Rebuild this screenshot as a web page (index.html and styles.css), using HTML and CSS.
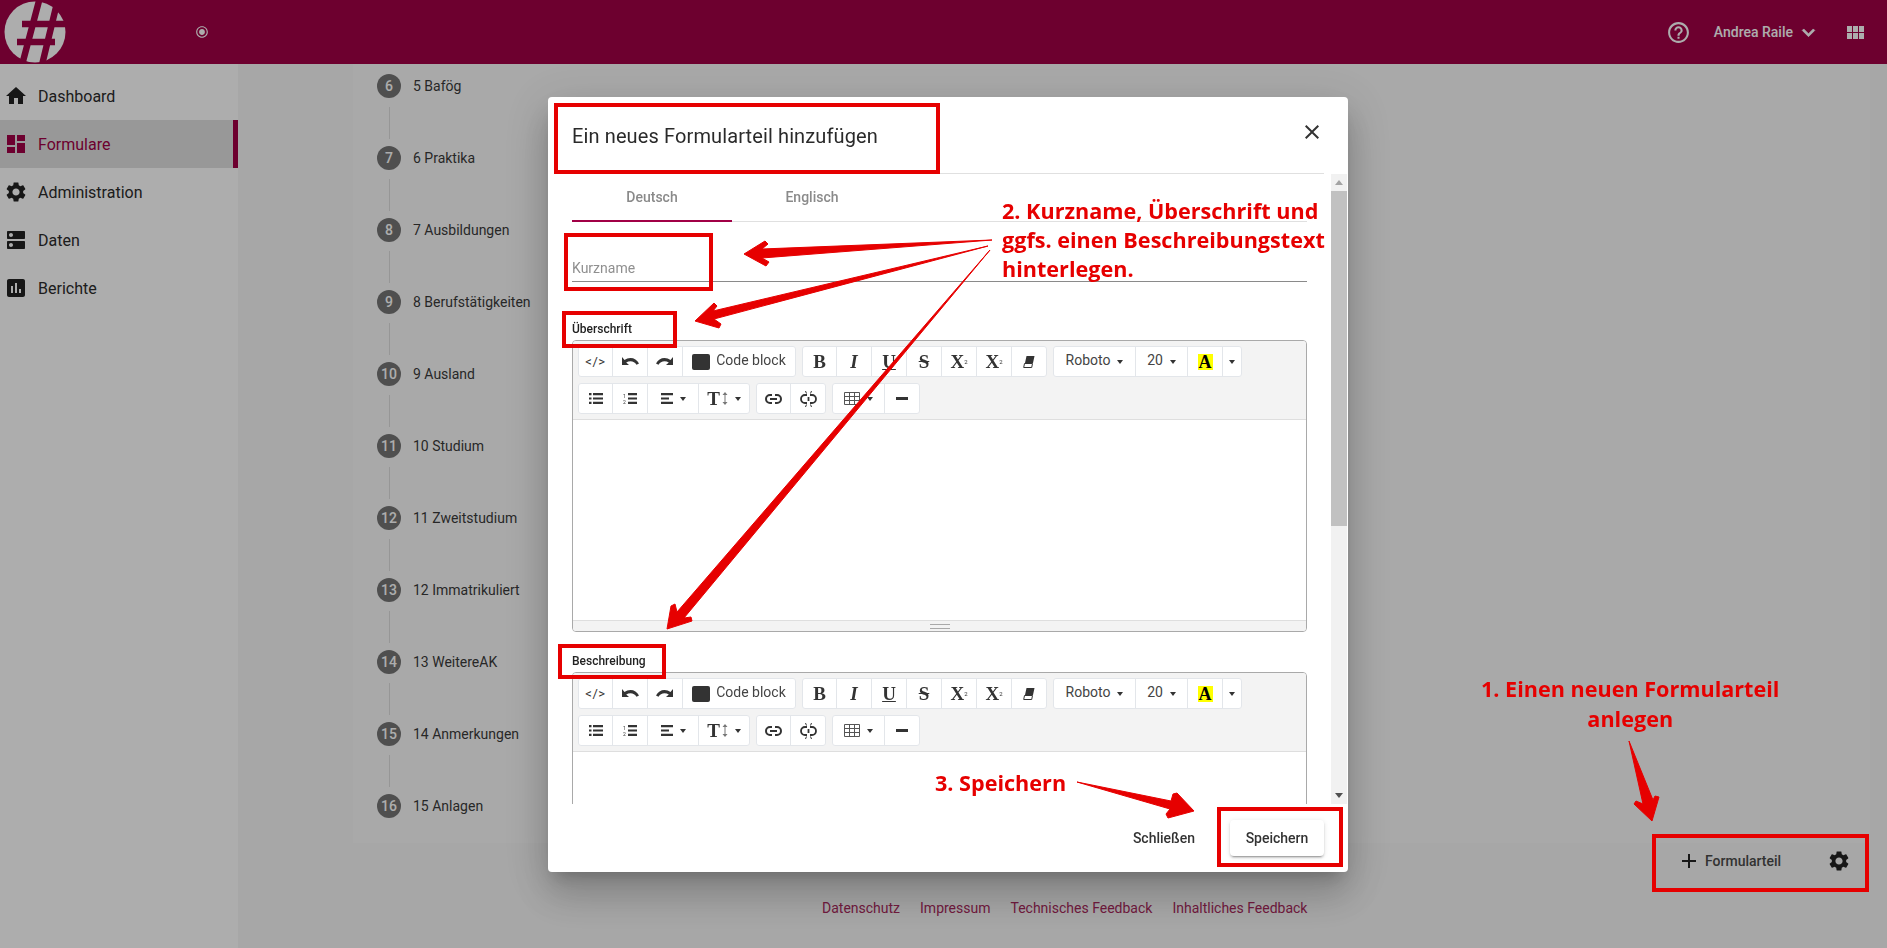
FILE: index.html
```html
<!DOCTYPE html>
<html lang="de">
<head>
  <meta charset="UTF-8">
  <meta name="viewport" content="width=device-width, initial-scale=1.0">
  <title>Formulare</title>
  <link rel="stylesheet" href="styles.css">
</head>
<body>
  <!-- toolbar icons, used twice -->
  <svg class="sprites">
    <symbol id="i-undo" viewBox="0 0 18 10"><path d="M1 0v8h7L5.200 5.400C6.500 4.600 8 4.200 9.500 4.200c2.500 0 4.800 1.300 6 3.500L18 6.500C16.300 3 13 1 9.500 1 7.300 1 5.200 1.800 3.500 3z"/></symbol>
    <symbol id="i-redo" viewBox="0 0 18 10"><path d="M17 0v8h-7l2.800-2.600C11.500 4.600 10 4.200 8.500 4.200c-2.500 0-4.800 1.300-6 3.500L0 6.500C1.700 3 5 1 8.500 1c2.200 0 4.300.8 6 2z"/></symbol>
    <symbol id="i-eraser" viewBox="0 0 14 14"><path d="M4.500 1H12.500L11 8H3z"/><path d="M2.500 8.500H10.500L9.700 12.500H1.700z" fill="#fff" stroke="#333"/></symbol>
    <symbol id="i-ul" viewBox="0 0 14 11"><path d="M0 0h2.500v2.200H0zM0 4.400h2.500v2.200H0zM0 8.800h2.500V11H0zM4 0h10v2.200H4zM4 4.400h10v2.200H4zM4 8.800h10V11H4z"/></symbol>
    <symbol id="i-ol" viewBox="0 0 14 11"><path d="M5 0h9v2.200H5zM5 4.400h9v2.200H5zM5 8.800h9V11H5z"/><text x="0" y="4.500" class="ico-num">1</text><text x="0" y="11" class="ico-num">2</text></symbol>
    <symbol id="i-align" viewBox="0 0 12 11"><path d="M0 0h12v2.200H0zM0 4.400h8v2.200H0zM0 8.800h12V11H0z"/></symbol>
    <symbol id="i-updown" viewBox="0 0 6 13"><path d="M3 0L5.500 3H3.500v7H5.500L3 13 .5 10H2.500V3H.5z"/></symbol>
    <symbol id="i-link" viewBox="0 0 17 10"><path d="M7 1H5a4 4 0 0 0 0 8h2M10 1h2a4 4 0 0 1 0 8h-2M5 5h7" fill="none" stroke="#333" stroke-width="2"/></symbol>
    <symbol id="i-unlink" viewBox="0 0 17 16"><path d="M7 4H5a4 4 0 0 0 0 8h2M10 4h2a4 4 0 0 1 0 8h-2M8.500 6v4" fill="none" stroke="#333" stroke-width="1.800"/><path d="M5.500 0l1 2.500M11.500 0l-1 2.500M5.500 16l1-2.500M11.500 16l-1-2.500" stroke="#333"/></symbol>
    <symbol id="i-table" viewBox="0 0 16 13"><path d="M.5.500h15v12H.5zM5.500.500v12M10.500.500v12M.5 4.500h15M.5 8.500h15" fill="none" stroke="#555"/></symbol>
    <symbol id="i-hr" viewBox="0 0 12 3"><path d="M0 0h12v3H0z"/></symbol>
    <symbol id="i-gear" viewBox="0 0 24 24"><path d="M19.140 12.940c.04-.3.06-.61.06-.94 0-.32-.02-.64-.07-.94l2.030-1.580c.18-.14.23-.41.12-.61l-1.920-3.320c-.12-.22-.37-.29-.59-.22l-2.390.96c-.5-.38-1.030-.7-1.620-.94l-.36-2.540c-.04-.24-.24-.41-.48-.41h-3.840c-.24 0-.43.17-.47.41l-.36 2.540c-.59.24-1.130.57-1.620.94l-2.390-.96c-.22-.08-.47 0-.59.22L2.740 8.870c-.12.21-.08.47.12.61l2.030 1.580c-.05.3-.09.63-.09.94s.02.64.07.94l-2.030 1.580c-.18.14-.23.41-.12.61l1.920 3.320c.12.22.37.29.59.22l2.390-.96c.5.38 1.030.7 1.620.94l.36 2.540c.05.24.24.41.48.41h3.840c.24 0 .44-.17.47-.41l.36-2.540c.59-.24 1.130-.56 1.620-.94l2.390.96c.22.08.47 0 .59-.22l1.920-3.320c.12-.22.07-.47-.12-.61l-2.010-1.580zM12 15.600c-1.980 0-3.600-1.620-3.600-3.600s1.620-3.600 3.600-3.600 3.600 1.620 3.600 3.600-1.620 3.600-3.600 3.600z"/></symbol>
  </svg>

  <header class="topbar">
    <svg class="logo" viewBox="0 0 62 62">
      <circle cx="31" cy="31" r="30.500" fill="#fff"/>
      <path d="M35.500-2L18 64M53 2L38 64M18 23H62M13 41H51" stroke="#a10046" stroke-width="6.500" fill="none"/>
    </svg>
    <svg class="radio-icon" viewBox="0 0 24 24"><path d="M12 7c-2.760 0-5 2.240-5 5s2.240 5 5 5 5-2.240 5-5-2.240-5-5-5zm0-5C6.480 2 2 6.480 2 12s4.480 10 10 10 10-4.480 10-10S17.520 2 12 2zm0 18c-4.420 0-8-3.580-8-8s3.580-8 8-8 8 3.580 8 8-3.580 8-8 8z"/></svg>
    <div class="topbar-right">
      <svg class="top-icon" viewBox="0 0 24 24"><path d="M11 18h2v-2h-2v2zm1-16C6.480 2 2 6.480 2 12s4.480 10 10 10 10-4.480 10-10S17.520 2 12 2zm0 18c-4.410 0-8-3.590-8-8s3.590-8 8-8 8 3.590 8 8-3.590 8-8 8zm0-14c-2.210 0-4 1.790-4 4h2c0-1.100.9-2 2-2s2 .9 2 2c0 2-3 1.750-3 5h2c0-2.250 3-2.500 3-5 0-2.210-1.790-4-4-4z"/></svg>
      <span class="user-name">Andrea Raile</span>
      <svg class="top-icon chevron" viewBox="0 0 24 24"><path d="M16.590 8.590L12 13.170 7.410 8.590 6 10l6 6 6-6z"/></svg>
      <div class="apps-grid"><i></i><i></i><i></i><i></i><i></i><i></i></div>
    </div>
  </header>

  <div class="layout">
    <nav class="sidebar">
      <a class="nav-item"><svg viewBox="0 0 24 24"><path d="M10 20v-6h4v6h5v-8h3L12 3 2 12h3v8z"/></svg>Dashboard</a>
      <a class="nav-item active"><svg viewBox="0 0 24 24"><path d="M3 13h8V3H3v10zm0 8h8v-6H3v6zm10 0h8V11h-8v10zm0-18v6h8V3h-8z"/></svg>Formulare</a>
      <a class="nav-item"><svg><use href="#i-gear"/></svg>Administration</a>
      <a class="nav-item"><svg viewBox="0 0 24 24"><path d="M20 13H4c-.55 0-1 .45-1 1v6c0 .55.45 1 1 1h16c.55 0 1-.45 1-1v-6c0-.55-.45-1-1-1zM7 19c-1.100 0-2-.9-2-2s.9-2 2-2 2 .9 2 2-.9 2-2 2zM20 3H4c-.55 0-1 .45-1 1v6c0 .55.45 1 1 1h16c.55 0 1-.45 1-1V4c0-.55-.45-1-1-1zM7 9c-1.100 0-2-.9-2-2s.9-2 2-2 2 .9 2 2-.9 2-2 2z"/></svg>Daten</a>
      <a class="nav-item"><svg viewBox="0 0 24 24"><path d="M19 3H5c-1.100 0-2 .9-2 2v14c0 1.100.9 2 2 2h14c1.100 0 2-.9 2-2V5c0-1.100-.9-2-2-2zM9 17H7v-7h2v7zm4 0h-2V7h2v10zm4 0h-2v-4h2v4z"/></svg>Berichte</a>
    </nav>

    <main class="main">
      <section class="sheet">
        <ol class="stepper">
          <li class="step"><span class="step-num">6</span>5 Bafög</li>
          <li class="step"><span class="step-num">7</span>6 Praktika</li>
          <li class="step"><span class="step-num">8</span>7 Ausbildungen</li>
          <li class="step"><span class="step-num">9</span>8 Berufstätigkeiten</li>
          <li class="step"><span class="step-num">10</span>9 Ausland</li>
          <li class="step"><span class="step-num">11</span>10 Studium</li>
          <li class="step"><span class="step-num">12</span>11 Zweitstudium</li>
          <li class="step"><span class="step-num">13</span>12 Immatrikuliert</li>
          <li class="step"><span class="step-num">14</span>13 WeitereAK</li>
          <li class="step"><span class="step-num">15</span>14 Anmerkungen</li>
          <li class="step"><span class="step-num">16</span>15 Anlagen</li>
        </ol>
      </section>
      <div class="actions">
        <svg class="add-icon" viewBox="0 0 24 24"><path d="M19 13h-6v6h-2v-6H5v-2h6V5h2v6h6v2z"/></svg>
        <span class="actions-label">Formularteil</span>
        <svg class="gear-icon"><use href="#i-gear"/></svg>
      </div>
      <footer class="page-footer">
        <a>Datenschutz</a>
        <a>Impressum</a>
        <a>Technisches Feedback</a>
        <a>Inhaltliches Feedback</a>
      </footer>
    </main>
  </div>

  <div class="backdrop"></div>

  <div class="modal">
    <div class="modal-header">
      <h2 class="modal-title">Ein neues Formularteil hinzufügen</h2>
      <svg class="modal-close" viewBox="0 0 24 24"><path d="M19 6.410L17.590 5 12 10.590 6.410 5 5 6.410 10.590 12 5 17.590 6.410 19 12 13.410 17.590 19 19 17.590 13.410 12z"/></svg>
    </div>
    <div class="modal-body">
      <div class="modal-content">
        <div class="tabs">
          <div class="tab active">Deutsch</div>
          <div class="tab">Englisch</div>
        </div>
        <div class="text-field">Kurzname</div>

        <div class="field-label">Überschrift</div>
        <div class="editor">
          <div class="toolbar">
            <div class="btn-group">
              <span class="tb-btn code">&lt;/&gt;</span>
              <span class="tb-btn"><svg class="ico-undo"><use href="#i-undo"/></svg></span>
              <span class="tb-btn"><svg class="ico-undo"><use href="#i-redo"/></svg></span>
              <span class="tb-btn wide"><i class="swatch"></i><span class="lifted">Code block</span></span>
            </div>
            <div class="btn-group">
              <span class="tb-btn serif">B</span>
              <span class="tb-btn serif italic">I</span>
              <span class="tb-btn serif under">U</span>
              <span class="tb-btn serif strike">S</span>
              <span class="tb-btn serif">X<sup>2</sup></span>
              <span class="tb-btn serif">X<sub>2</sub></span>
              <span class="tb-btn"><svg class="ico-eraser"><use href="#i-eraser"/></svg></span>
            </div>
            <div class="btn-group">
              <span class="tb-btn font"><span class="lifted">Roboto</span><i class="caret"></i></span>
              <span class="tb-btn size"><span class="lifted">20</span><i class="caret"></i></span>
              <span class="tb-btn serif"><b class="hilite">A</b></span>
              <span class="tb-btn narrow"><i class="caret solo"></i></span>
            </div>
          </div>
          <div class="toolbar second">
            <div class="btn-group">
              <span class="tb-btn"><svg class="ico-list"><use href="#i-ul"/></svg></span>
              <span class="tb-btn"><svg class="ico-list"><use href="#i-ol"/></svg></span>
              <span class="tb-btn mid"><svg class="ico-align"><use href="#i-align"/></svg><i class="caret"></i></span>
              <span class="tb-btn mid serif tt">T<svg class="ico-updown"><use href="#i-updown"/></svg><i class="caret"></i></span>
            </div>
            <div class="btn-group">
              <span class="tb-btn"><svg class="ico-link"><use href="#i-link"/></svg></span>
              <span class="tb-btn"><svg class="ico-unlink"><use href="#i-unlink"/></svg></span>
            </div>
            <div class="btn-group">
              <span class="tb-btn mid"><svg class="ico-table"><use href="#i-table"/></svg><i class="caret"></i></span>
              <span class="tb-btn"><svg class="ico-hr"><use href="#i-hr"/></svg></span>
            </div>
          </div>
          <div class="editable"></div>
          <div class="statusbar"><i class="grip"></i></div>
        </div>

        <div class="field-label">Beschreibung</div>
        <div class="editor">
          <div class="toolbar">
            <div class="btn-group">
              <span class="tb-btn code">&lt;/&gt;</span>
              <span class="tb-btn"><svg class="ico-undo"><use href="#i-undo"/></svg></span>
              <span class="tb-btn"><svg class="ico-undo"><use href="#i-redo"/></svg></span>
              <span class="tb-btn wide"><i class="swatch"></i><span class="lifted">Code block</span></span>
            </div>
            <div class="btn-group">
              <span class="tb-btn serif">B</span>
              <span class="tb-btn serif italic">I</span>
              <span class="tb-btn serif under">U</span>
              <span class="tb-btn serif strike">S</span>
              <span class="tb-btn serif">X<sup>2</sup></span>
              <span class="tb-btn serif">X<sub>2</sub></span>
              <span class="tb-btn"><svg class="ico-eraser"><use href="#i-eraser"/></svg></span>
            </div>
            <div class="btn-group">
              <span class="tb-btn font"><span class="lifted">Roboto</span><i class="caret"></i></span>
              <span class="tb-btn size"><span class="lifted">20</span><i class="caret"></i></span>
              <span class="tb-btn serif"><b class="hilite">A</b></span>
              <span class="tb-btn narrow"><i class="caret solo"></i></span>
            </div>
          </div>
          <div class="toolbar second">
            <div class="btn-group">
              <span class="tb-btn"><svg class="ico-list"><use href="#i-ul"/></svg></span>
              <span class="tb-btn"><svg class="ico-list"><use href="#i-ol"/></svg></span>
              <span class="tb-btn mid"><svg class="ico-align"><use href="#i-align"/></svg><i class="caret"></i></span>
              <span class="tb-btn mid serif tt">T<svg class="ico-updown"><use href="#i-updown"/></svg><i class="caret"></i></span>
            </div>
            <div class="btn-group">
              <span class="tb-btn"><svg class="ico-link"><use href="#i-link"/></svg></span>
              <span class="tb-btn"><svg class="ico-unlink"><use href="#i-unlink"/></svg></span>
            </div>
            <div class="btn-group">
              <span class="tb-btn mid"><svg class="ico-table"><use href="#i-table"/></svg><i class="caret"></i></span>
              <span class="tb-btn"><svg class="ico-hr"><use href="#i-hr"/></svg></span>
            </div>
          </div>
          <div class="editable"></div>
        </div>
      </div>
      <div class="scrollbar">
        <i class="scroll-arrow up"></i>
        <div class="scroll-thumb"></div>
        <i class="scroll-arrow down"></i>
      </div>
    </div>
    <div class="modal-footer">
      <button class="btn-plain">Schließen</button>
      <button class="btn-raised">Speichern</button>
    </div>
  </div>

  <!-- annotations drawn on top of the screenshot -->
  <svg class="marks" viewBox="0 0 1887 948">
    <g class="mark-boxes">
      <rect x="556" y="105" width="382" height="67"/>
      <rect x="566" y="235" width="145" height="54"/>
      <rect x="564" y="313" width="111" height="33"/>
      <rect x="560" y="646" width="104" height="31"/>
      <rect x="1219" y="809" width="122" height="56"/>
      <rect x="1654" y="836" width="213" height="54"/>
    </g>
    <g class="mark-arrows">
      <polygon points="992,240 762,249 768,244 765,241 744,254 766,266 769,262 762,258"/>
      <polygon points="988,246 713,311 717,306 714,303 695,321 719,328 721,324 714,319"/>
      <polygon points="990,250 684,618 691,617 692,621 667,629 671,606 675,604 677,612"/>
      <polygon points="1077,782 1171,801 1173,794 1177,793 1194,811 1168,818 1166,814 1170,809"/>
      <polygon points="1629,741 1653,800 1655,796 1659,797 1652,821 1634,804 1636,801 1643,804"/>
    </g>
  </svg>
  <div class="note note-two">2. Kurzname, Überschrift und<br>ggfs. einen Beschreibungstext<br>hinterlegen.</div>
  <div class="note note-three">3. Speichern</div>
  <div class="note note-one">1. Einen neuen Formularteil<br>anlegen</div>
</body>
</html>
```

FILE: styles.css
```css
* {
  box-sizing: border-box;
}
html, body {
  height: 100%;
}
body {
  font-family: Roboto, "Liberation Sans", sans-serif;
  font-size: 14px;
  margin: 0;
  background-color: #fff;
  color: #333;
  overflow: hidden;
}
.sprites {
  display: none;
}

/* top bar */
.topbar {
  height: 64px;
  background-color: #a10046;
  display: flex;
  align-items: center;
  color: #fff;
}
.logo {
  width: 62px;
  height: 62px;
  margin-left: 4px;
}
.radio-icon {
  width: 14px;
  height: 14px;
  margin-left: 129px;
  fill: #fff;
}
.topbar-right {
  margin-left: auto;
  display: flex;
  align-items: center;
  padding-right: 23px;
}
.top-icon {
  width: 25px;
  height: 25px;
  fill: #fff;
}
.user-name {
  font-weight: 500;
  margin-left: 23px;
}
.chevron {
  margin-left: 3px;
  stroke: #fff;
  stroke-width: 0.7;
}
.apps-grid {
  display: grid;
  grid-template-columns: repeat(3, 5px);
  grid-auto-rows: 6px;
  gap: 1px;
  margin-left: 26px;
}
.apps-grid i {
  background-color: #fff;
}

/* sidebar */
.layout {
  display: flex;
  height: calc(100% - 64px);
}
.sidebar {
  width: 238px;
  flex-shrink: 0;
  padding-top: 8px;
  background-color: #fff;
}
.nav-item {
  display: flex;
  align-items: center;
  height: 48px;
  padding-left: 4px;
  font-size: 16px;
  color: #2b2b2b;
}
.nav-item svg {
  width: 24px;
  height: 24px;
  margin-right: 10px;
  fill: #222;
}
.nav-item.active {
  background-color: #e0e0e0;
  border-right: 5px solid #a10046;
  color: #a10046;
}
.nav-item.active svg {
  fill: #a10046;
}

/* main */
.main {
  flex: 1;
  background-color: #f7f7f7;
  padding: 0 17px 0 115px;
}
.sheet {
  height: 779px;
  background-color: #fafafa;
  overflow: hidden;
}
.stepper {
  list-style: none;
  margin: -14px 0 0;
  padding: 0 0 0 24px;
}
.step {
  height: 72px;
  display: flex;
  align-items: center;
  position: relative;
  color: #3a3a3a;
}
.step::after {
  content: "";
  position: absolute;
  left: 12px;
  top: 57px;
  height: 32px;
  width: 1px;
  background-color: #ddd;
}
.step:last-child::after {
  display: none;
}
.step-num {
  width: 24px;
  height: 24px;
  border-radius: 50%;
  background-color: #757575;
  color: #fff;
  font-size: 14px;
  font-weight: 500;
  display: flex;
  align-items: center;
  justify-content: center;
  margin-right: 12px;
}
.actions {
  height: 36px;
  display: flex;
  align-items: center;
  color: #4a4a4a;
}
.add-icon {
  width: 24px;
  height: 24px;
  margin-left: 1324px;
  fill: #222;
}
.actions-label {
  margin-left: 4px;
  font-weight: 500;
}
.gear-icon {
  width: 24px;
  height: 24px;
  margin-left: 46px;
  fill: #222;
}
.page-footer {
  display: flex;
  gap: 20px;
  margin-top: 21px;
  padding-left: 469px;
  line-height: 16px;
}
.page-footer a {
  color: #a8285c;
}

.backdrop {
  position: fixed;
  inset: 0;
  background-color: rgba(0, 0, 0, 0.32);
}

/* dialog */
.modal {
  position: fixed;
  left: 548px;
  top: 97px;
  width: 800px;
  height: 775px;
  background-color: #fff;
  border-radius: 4px;
  display: flex;
  flex-direction: column;
  box-shadow: 0 11px 15px -7px rgba(0, 0, 0, 0.2), 0 24px 38px 3px rgba(0, 0, 0, 0.14), 0 9px 46px 8px rgba(0, 0, 0, 0.12);
}
.modal-header {
  height: 77px;
  margin: 0 24px;
  padding-top: 1px;
  border-bottom: 1px solid #e0e0e0;
  display: flex;
  align-items: center;
  justify-content: space-between;
}
.modal-title {
  margin: 0;
  font-size: 20px;
  font-weight: 400;
  letter-spacing: 0.12px;
  color: #2a2a2a;
}
.modal-close {
  width: 24px;
  height: 24px;
  margin-top: -8px;
  fill: #333;
}
.modal-body {
  display: flex;
  height: 630px;
  overflow: hidden;
}
.modal-content {
  width: 783px;
  padding: 0 24px;
  overflow: hidden;
}
.tabs {
  display: flex;
  height: 48px;
  border-bottom: 1px solid #e0e0e0;
}
.tab {
  width: 160px;
  height: 48px;
  padding-top: 15px;
  text-align: center;
  color: #8a8a8a;
  font-weight: 500;
}
.tab.active {
  border-bottom: 2px solid #a10046;
}
.text-field {
  height: 38px;
  margin-top: 22px;
  padding-top: 16px;
  border-bottom: 1px solid #8a8a8a;
  color: #8f8f8f;
}
.field-label {
  margin-top: 40px;
  height: 18px;
  font-size: 12px;
  font-weight: 500;
  line-height: 14px;
  color: #222;
}
.editor {
  border: 1px solid #a9a9a9;
  border-radius: 4px;
  overflow: hidden;
}
.editor + .field-label {
  margin-top: 22px;
}
.toolbar {
  display: flex;
  gap: 6px;
  padding: 5px 5px 0;
  background-color: #f3f3f3;
}
.toolbar.second {
  padding: 6px 5px 5px;
  border-bottom: 1px solid #dedede;
}
.btn-group {
  display: flex;
  height: 31px;
  background-color: #fff;
  border: 1px solid #e3e6ea;
  border-radius: 3px;
}
.tb-btn {
  width: 35px;
  display: flex;
  align-items: center;
  justify-content: center;
  border-left: 1px solid #e3e6ea;
  color: #333;
  font-size: 14px;
  flex-shrink: 0;
}
.tb-btn:first-child {
  border-left: 0;
  width: 33px;
}
.tb-btn.wide {
  width: 113px;
  color: #444;
}
.tb-btn.mid {
  width: 51px;
}
.tb-btn.font {
  width: 81px;
  color: #444;
}
.tb-btn.size {
  width: 52px;
  color: #444;
}
.tb-btn.narrow {
  width: 19px;
}
.tb-btn.code {
  font-size: 13px;
  letter-spacing: 0.6px;
}
.lifted {
  margin-bottom: 3px;
}
.tb-btn.serif {
  font-family: "Liberation Serif", serif;
  font-size: 19px;
  font-weight: 700;
}
.tb-btn.italic {
  font-style: italic;
}
.tb-btn.under {
  text-decoration: underline;
}
.tb-btn.strike {
  text-decoration: line-through;
}
.tb-btn sup,
.tb-btn sub {
  font-size: 6px;
  font-family: Roboto, sans-serif;
  font-weight: 400;
  line-height: 0;
}
.swatch {
  width: 18px;
  height: 16px;
  margin-right: 6px;
  background-color: #333;
  border-radius: 2px;
}
.tb-btn svg {
  fill: #333;
}
.ico-undo {
  width: 18px;
  height: 10px;
}
.ico-eraser {
  width: 14px;
  height: 14px;
}
.ico-list {
  width: 14px;
  height: 11px;
}
.ico-align {
  width: 12px;
  height: 11px;
}
.tb-btn .ico-updown {
  width: 6px;
  height: 13px;
  margin-left: 2px;
  fill: #777;
}
.ico-link {
  width: 17px;
  height: 10px;
}
.ico-unlink {
  width: 17px;
  height: 16px;
}
.ico-table {
  width: 16px;
  height: 13px;
}
.ico-hr {
  width: 12px;
  height: 3px;
}
.ico-num {
  font: 5px Roboto, sans-serif;
  fill: #333;
}
.caret {
  width: 0;
  height: 0;
  margin-left: 7px;
  border-left: 3.5px solid transparent;
  border-right: 3.5px solid transparent;
  border-top: 4px solid #333;
}
.caret.solo {
  margin-left: 0;
}
.hilite {
  background-color: #ff0;
  color: #000;
  padding: 0 1px;
  line-height: 16px;
  font-size: 18px;
}
.editable {
  height: 200px;
  background-color: #fff;
}
.statusbar {
  height: 11px;
  background-color: #f3f3f3;
  border-top: 1px solid #dedede;
  display: flex;
  align-items: center;
  justify-content: center;
}
.grip {
  width: 20px;
  height: 5px;
  border-top: 1px solid #a9a9a9;
  border-bottom: 1px solid #a9a9a9;
}
.scrollbar {
  width: 16px;
  background-color: #f1f1f1;
  display: flex;
  flex-direction: column;
  align-items: center;
  position: relative;
}
.scroll-arrow {
  position: absolute;
  width: 0;
  height: 0;
  border-left: 4px solid transparent;
  border-right: 4px solid transparent;
}
.scroll-arrow.up {
  top: 6px;
  border-bottom: 5px solid #a3a3a3;
}
.scroll-arrow.down {
  bottom: 6px;
  border-top: 5px solid #505050;
}
.scroll-thumb {
  width: 100%;
  height: 335px;
  margin-top: 17px;
  background-color: #c1c1c1;
}
.modal-footer {
  flex: 1;
  display: flex;
  align-items: center;
  justify-content: flex-end;
  padding: 0 24px 0 0;
  gap: 29px;
}
.modal-footer button {
  font: 500 14px Roboto, sans-serif;
  border: 0;
  background: #fff;
  color: #333;
  height: 36px;
  border-radius: 4px;
}
.btn-raised {
  width: 94px;
  box-shadow: 0 3px 1px -2px rgba(0, 0, 0, 0.2), 0 2px 2px 0 rgba(0, 0, 0, 0.14), 0 1px 5px 0 rgba(0, 0, 0, 0.12);
}

/* annotations */
.marks {
  position: fixed;
  left: 0;
  top: 0;
  width: 1887px;
  height: 948px;
  pointer-events: none;
}
.mark-boxes rect {
  fill: none;
  stroke: #e60000;
  stroke-width: 4;
}
.mark-arrows polygon {
  fill: #e60000;
  stroke: #e60000;
  stroke-linejoin: round;
  stroke-width: 1;
}
.note {
  position: fixed;
  font-family: "Open Sans", sans-serif;
  font-weight: 700;
  font-size: 21.6px;
  line-height: 29px;
  color: #e60000;
  white-space: nowrap;
}
.note-two {
  left: 1002px;
  top: 196px;
}
.note-three {
  left: 935px;
  top: 768px;
}
.note-one {
  left: 1481px;
  top: 674px;
  line-height: 30px;
  text-align: center;
}
```
